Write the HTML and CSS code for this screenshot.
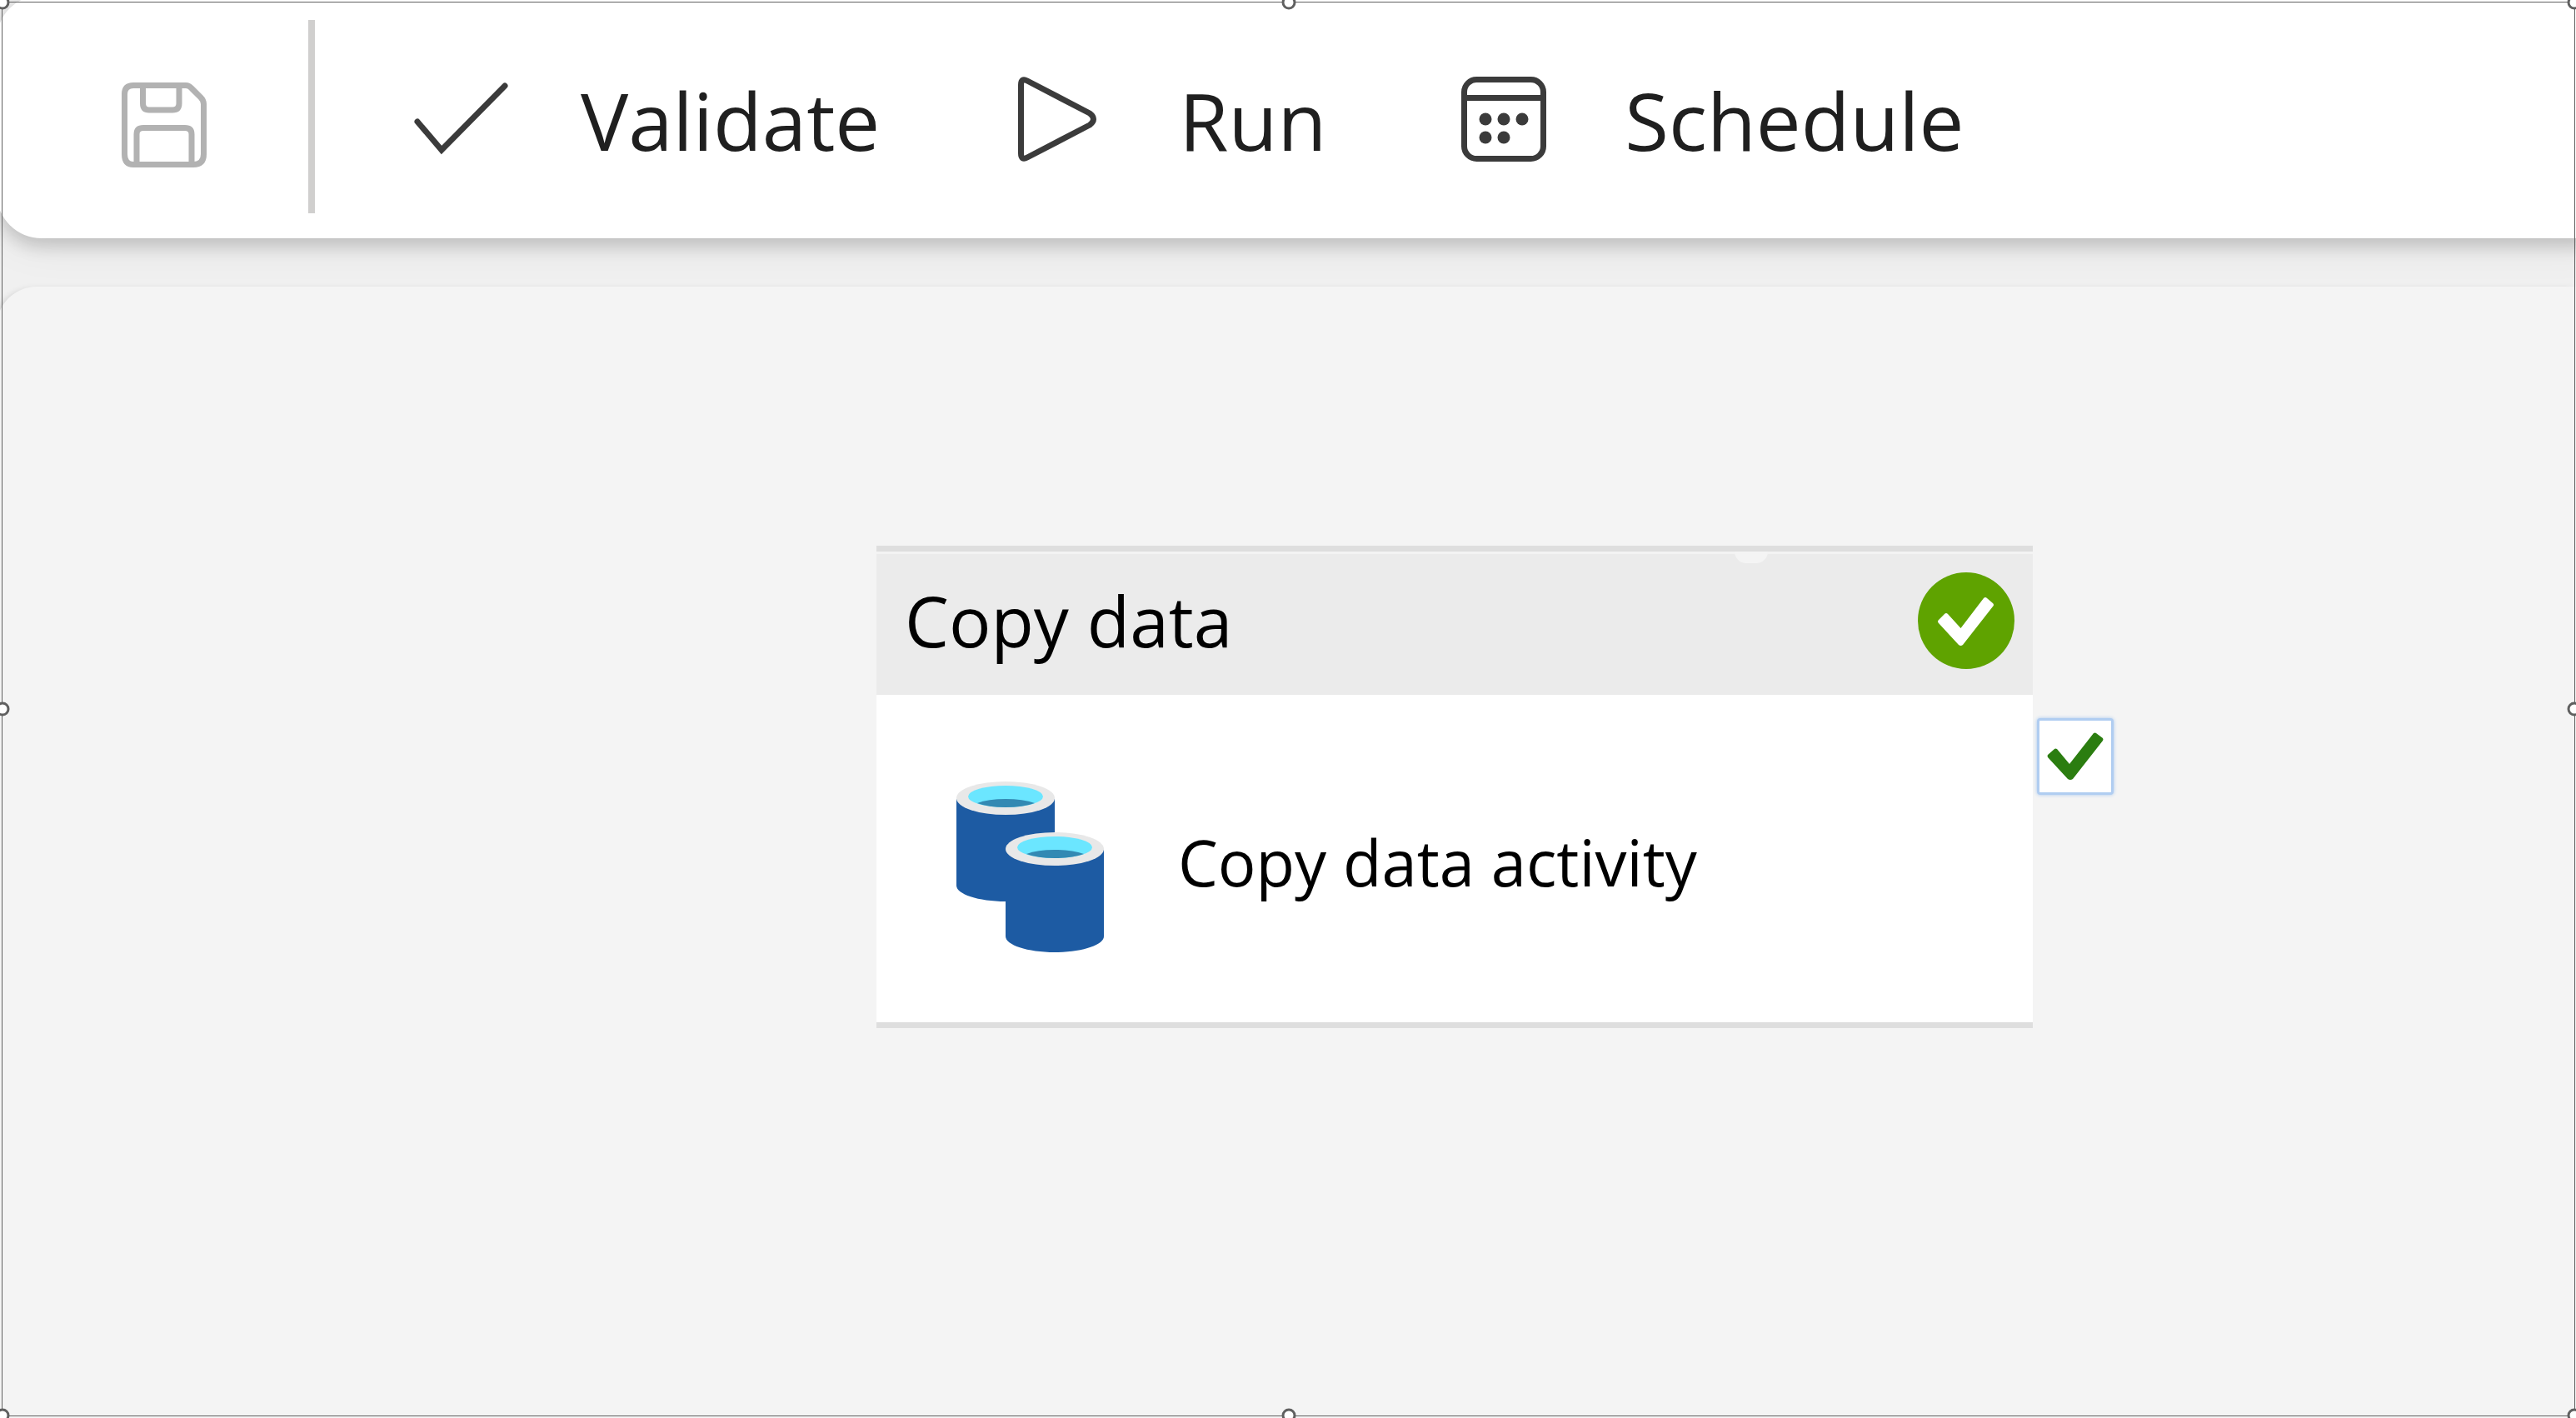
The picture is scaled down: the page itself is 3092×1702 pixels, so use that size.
FILE: index.html
```html
<!DOCTYPE html>
<html lang="en">
<head>
<meta charset="utf-8">
<title>Pipeline editor</title>
<link rel="stylesheet" href="styles.css">
</head>
<body>
<div class="editor">
  <header class="toolbar" role="toolbar" aria-label="Pipeline">
    <button class="tool tool-save" type="button" aria-label="Save" disabled>
      <svg class="icon" viewBox="0 0 102 102" fill="none" stroke="currentColor" stroke-width="7">
        <path d="M14 3.500H77Q81 3.500 84 7L95 18Q98.500 21.500 98.500 26V86Q98.500 98.500 86 98.500H14Q3.500 98.500 3.500 86V14Q3.500 3.500 14 3.500Z"/>
        <path d="M25.500 4V25Q25.500 33 33 33H61Q69 33 69 25V4M18 98V62Q18 54.500 26 54.500H76Q84 54.500 84 62V98"/>
      </svg>
    </button>
    <span class="divider"></span>
    <button class="tool tool-validate" type="button">
      <svg class="icon icon-wide" viewBox="0 0 116 102" fill="none" stroke="currentColor" stroke-width="7" stroke-linecap="round">
        <path d="M4 54L33 88L109 11"/>
      </svg>
      <span>Validate</span>
    </button>
    <button class="tool tool-run" type="button">
      <svg class="icon" viewBox="0 0 102 102" fill="none" stroke="currentColor" stroke-width="7" stroke-linejoin="round">
        <path d="M7.500 10Q7.500 1 15 5L90 44Q99 51 90 58L15 97Q7.500 101 7.500 92Z"/>
      </svg>
      <span>Run</span>
    </button>
    <button class="tool tool-schedule" type="button">
      <svg class="icon" viewBox="0 0 102 102" fill="none" stroke="currentColor" stroke-width="7">
        <rect x="3.500" y="3.500" width="95" height="95" rx="15"/>
        <path d="M4 25.500H98"/>
        <g fill="currentColor" stroke="none">
          <circle cx="29" cy="51" r="7.500"/><circle cx="51" cy="51" r="7.500"/><circle cx="73" cy="51" r="7.500"/>
          <circle cx="29" cy="73" r="7.500"/><circle cx="51" cy="73" r="7.500"/>
        </g>
      </svg>
      <span>Schedule</span>
    </button>
  </header>

  <main class="canvas">
    <article class="activity">
      <div class="activity-head">
        <h2 class="activity-type">Copy data</h2>
        <svg class="status" viewBox="0 0 116 116" role="img" aria-label="Succeeded">
          <circle cx="58" cy="58" r="58" fill="#5fa300"/>
          <path d="M25 61Q23 59 25 57L32 50Q34 48 36 50L51.500 67L79 31Q81 29 83 31L90 37Q92 39 90 41L54 87Q51.500 89 49 87Z" fill="#fff"/>
        </svg>
      </div>
      <div class="activity-body">
        <svg class="copy-icon" viewBox="0 0 178 206" aria-hidden="true">
          <g id="cylinder">
            <path d="M0 22V126C0 136 26 145 59 145S118 136 118 126V22Z" fill="#1d5ba3"/>
            <ellipse cx="59" cy="21" rx="59" ry="20" fill="#e8e8e8"/>
            <ellipse cx="59" cy="19" rx="45" ry="13" fill="#6be6ff"/>
            <path d="M25 27Q38 22 59 22T94 27Q80 32 59 32T25 27Z" fill="#3389b3"/>
          </g>
          <use href="#cylinder" x="59" y="61"/>
        </svg>
        <span class="activity-name">Copy data activity</span>
      </div>
      <span class="notch"></span>
      <button class="output" type="button" aria-label="On success">
        <svg class="output-icon" viewBox="0 0 68 58" aria-hidden="true">
          <path d="M1 30Q0 28 1 27L9 20Q10 19 12 20L27 38L56 1Q58 0 59 1L67 7Q68 9 67 10L31 56Q28 58 25 56Z" fill="#2b7d10"/>
        </svg>
      </button>
    </article>
  </main>
</div>

<div class="selection" aria-hidden="true">
  <i class="handle top left"></i><i class="handle top center"></i><i class="handle top right"></i>
  <i class="handle middle left"></i><i class="handle middle right"></i>
  <i class="handle bottom left"></i><i class="handle bottom center"></i><i class="handle bottom right"></i>
</div>
</body>
</html>
```

FILE: styles.css
```css
* {
  box-sizing: border-box;
}

body {
  margin: 0;
  overflow: hidden;
  background: #f0f0f0;
  color: #000;
  font-family: "Open Sans", "Noto Sans", sans-serif;
}

button {
  padding: 0;
  border: 0;
  background: none;
  color: inherit;
  font: inherit;
}

.editor {
  display: flex;
  flex-direction: column;
  gap: 58px;
  min-height: 100vh;
}

/* Toolbar */
.toolbar {
  display: flex;
  align-items: center;
  height: 292px;
  margin: -6px -60px 0 -4px;
  padding-left: 150px;
  border-radius: 54px;
  background: #fff;
  box-shadow: 0 10px 20px rgba(0, 0, 0, 0.16), 0 4px 56px rgba(0, 0, 0, 0.08);
}

.tool {
  display: flex;
  align-items: center;
  gap: 84px;
  padding-top: 8px;
  color: #3b3b3b;
  font-size: 96px;
  line-height: 128px;
}

.tool span {
  color: #1f1f1f;
}

.tool-save {
  color: #b2b2b2;
  padding-top: 22px;
}

.icon {
  width: 102px;
  height: 102px;
  margin-bottom: 2px;
}

.icon-wide {
  width: 116px;
}

.divider {
  width: 8px;
  height: 232px;
  margin: 0 119px 0 122px;
  background: #d0cfce;
}

.tool-run {
  margin-left: 162px;
  gap: 95px;
}

.tool-schedule {
  margin-left: 162px;
  gap: 94px;
}

/* Canvas */
.canvas {
  position: relative;
  flex: 1;
  margin-left: -4px;
  padding: 311px 0 0 1056px;
  border-radius: 48px 0 0 0;
  background: #f4f4f4;
  box-shadow: -4px 4px 8px rgba(0, 0, 0, 0.16);
}

.activity {
  position: relative;
  width: 1388px;
  border-top: 7px solid #dedede;
  border-bottom: 7px solid #dedede;
  background: #fff;
}

.activity-head {
  display: flex;
  align-items: center;
  justify-content: space-between;
  height: 172px;
  padding: 0 22px 10px 34px;
  border-top: 3px solid #f3f3f3;
  background: #ebebeb;
}

.activity-type {
  margin: 0;
  font-size: 84px;
  font-weight: 400;
  line-height: 116px;
}

.status {
  width: 116px;
  height: 116px;
}

.activity-body {
  display: flex;
  align-items: center;
  gap: 88px;
  height: 393px;
  padding: 18px 96px 0;
}

.copy-icon {
  width: 178px;
  height: 206px;
}

.activity-name {
  padding-bottom: 10px;
  font-size: 76px;
  line-height: 104px;
}

.notch {
  position: absolute;
  top: 0;
  left: 1030px;
  width: 40px;
  height: 14px;
  border-radius: 0 0 20px 20px;
  background: #f4f4f4;
}

.output {
  position: absolute;
  top: 200px;
  left: 1393px;
  display: grid;
  place-items: center;
  width: 92px;
  height: 92px;
  border: 3px solid #b0cdf1;
  border-radius: 4px;
  background: #fff;
  box-shadow: 0 0 4px #a9c8ef;
}

.output-icon {
  width: 68px;
  height: 58px;
}

/* Selection frame over the whole picture */
.selection {
  position: fixed;
  inset: 2px 1px 2px 2px;
  border: 1px solid #606060;
  pointer-events: none;
}

.handle {
  position: absolute;
  width: 17px;
  height: 17px;
  border: 3px solid #606060;
  border-radius: 50%;
  background: #fff;
  transform: translate(-50%, -50%);
}

.top { top: 0; }
.middle { top: 50%; }
.bottom { top: 100%; }
.left { left: 0; }
.center { left: 50%; }
.right { left: 100%; }
```
